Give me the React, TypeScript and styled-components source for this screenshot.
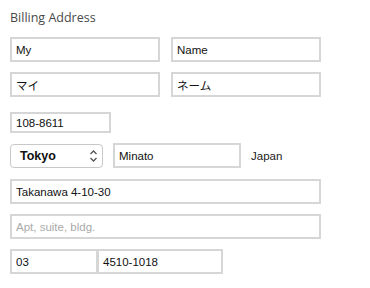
import styled, { createGlobalStyle } from 'styled-components';

const GlobalStyle = createGlobalStyle`
  body {
    margin: 0;
    background: #fff;
  }
`;

const Form = styled.div`
  display: flex;
  flex-direction: column;
  padding: 8px 10px;
  font-family: "Liberation Sans", "Noto Sans CJK JP", sans-serif;
`;

const Title = styled.div`
  font-family: "Open Sans", "Noto Sans", sans-serif;
  font-size: 12.5px;
  color: #4a4a4a;
  height: 18px;
  line-height: 20px;
  margin-bottom: 11px;
`;

const Row = styled.div<{ $gap?: number; $mb?: number }>`
  display: flex;
  align-items: center;
  gap: ${p => p.$gap ?? 0}px;
  margin-bottom: ${p => p.$mb ?? 10}px;
`;

const Field = styled.input<{ $w: number; $h?: number; $join?: boolean }>`
  box-sizing: border-box;
  width: ${p => p.$w}px;
  height: ${p => p.$h ?? 25}px;
  margin: 0;
  margin-left: ${p => (p.$join ? '-1px' : '0')};
  padding: 0 4px;
  border: 2px solid #d6d6d6;
  border-radius: 0;
  outline: none;
  background: #fff;
  font-family: "Liberation Sans", "Noto Sans CJK JP", sans-serif;
  font-size: 11.5px;
  color: #111;

  &::placeholder {
    color: #aaa;
  }
`;

const Select = styled.div`
  box-sizing: border-box;
  width: 93px;
  height: 24px;
  display: flex;
  align-items: center;
  justify-content: space-between;
  padding: 0 4px 0 9px;
  border: 1px solid #c8c8c8;
  border-radius: 4px;
  background: #fff;
  font-family: "Liberation Sans", sans-serif;
  font-weight: bold;
  font-size: 12.5px;
  color: #111;
`;

const Country = styled.span`
  font-size: 11.5px;
  color: #222;
`;

const Chevrons = () => (
  <svg width="9" height="14" viewBox="0 0 9 14">
    <path d="M1.5 5 L4.5 2 L7.5 5" fill="none" stroke="#555" strokeWidth="1.3" />
    <path d="M1.5 9 L4.5 12 L7.5 9" fill="none" stroke="#555" strokeWidth="1.3" />
  </svg>
);

export default function App() {
  return (
    <>
      <GlobalStyle />
      <Form>
        <Title>Billing Address</Title>
        <Row $gap={11}>
          <Field $w={150} defaultValue="My" />
          <Field $w={150} defaultValue="Name" />
        </Row>
        <Row $gap={11} $mb={15}>
          <Field $w={150} defaultValue="マイ" />
          <Field $w={150} defaultValue="ネーム" />
        </Row>
        <Row $mb={10}>
          <Field $w={101} $h={21} defaultValue="108-8611" />
        </Row>
        <Row $gap={10} $mb={11}>
          <Select>
            Tokyo
            <Chevrons />
          </Select>
          <Field $w={128} $h={25} defaultValue="Minato" />
          <Country>Japan</Country>
        </Row>
        <Row>
          <Field $w={311} defaultValue="Takanawa 4-10-30" />
        </Row>
        <Row>
          <Field $w={311} placeholder="Apt, suite, bldg." />
        </Row>
        <Row>
          <Field $w={88} defaultValue="03" />
          <Field $w={126} $join defaultValue="4510-1018" />
        </Row>
      </Form>
    </>
  );
}
